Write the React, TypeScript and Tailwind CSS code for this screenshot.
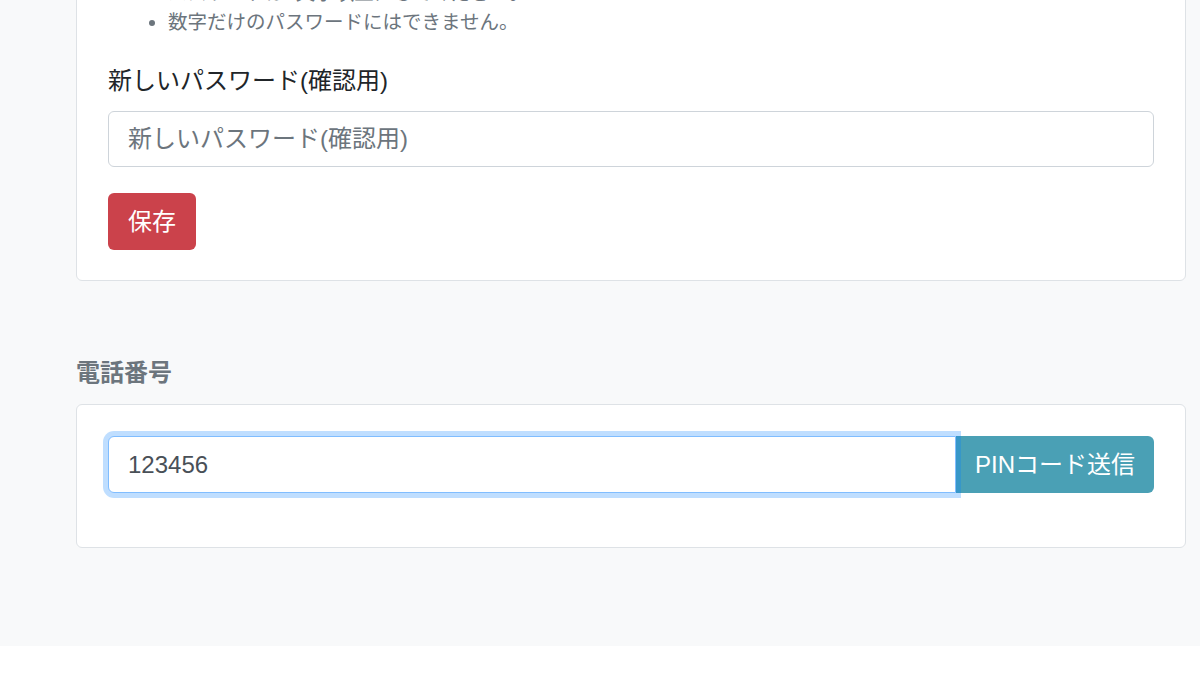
import React from 'react';

const font = "font-['Liberation_Sans','Noto_Sans_CJK_JP',sans-serif]";

const App: React.FC = () => {
  return (
    <div className={`${font} bg-white min-h-[694px]`}>
      {/* page */}
      <section className="bg-[#f8f9fa] pl-[76px] pr-[14px] pb-[98px]">
        {/* password card (scrolled) */}
        <div className="-mt-[53px] bg-white border border-[#dee2e6] rounded-[6px] px-[31px] pt-[31px] pb-[30px]">
          <ul className="list-disc pl-[60px] text-[19.5px] leading-[29px] text-[#6c757d] marker:text-[#6c757d]">
            <li>パスワードは8文字以上にしてください。</li>
            <li>数字だけのパスワードにはできません。</li>
          </ul>
          <label className="block mt-[26px] mb-[12px] text-[24px] leading-[36px] text-[#212529]">
            新しいパスワード(確認用)
          </label>
          <input
            type="password"
            placeholder="新しいパスワード(確認用)"
            className="block w-full h-[56px] px-[19px] text-[24px] text-[#495057] placeholder:text-[#6c757d] border border-[#ced4da] rounded-[6px] bg-white outline-none"
          />
          <button
            type="button"
            className="mt-[26px] h-[57px] w-[88px] rounded-[6px] bg-[#cb424b] text-white text-[24px]"
          >
            保存
          </button>
        </div>

        {/* phone */}
        <h5 className="mt-[74px] mb-[13px] text-[24px] leading-[36px] font-bold text-[#6c757d]">電話番号</h5>
        <div className="bg-white border border-[#dee2e6] rounded-[6px] px-[31px] pt-[31px] pb-[30px]">
          <div className="flex mb-[24px]">
            <input
              type="text"
              defaultValue="123456"
              className="relative z-10 flex-1 min-w-0 h-[57px] px-[19px] text-[24px] text-[#495057] bg-white border border-[#80bdff] rounded-l-[6px] outline-none ring-[5px] ring-[#007bff]/25"
            />
            <button
              type="button"
              className="w-[198px] h-[57px] rounded-r-[6px] bg-[#4aa0b5] text-white text-[24px]"
            >
              PINコード送信
            </button>
          </div>
        </div>
      </section>
    </div>
  );
};

export default App;
